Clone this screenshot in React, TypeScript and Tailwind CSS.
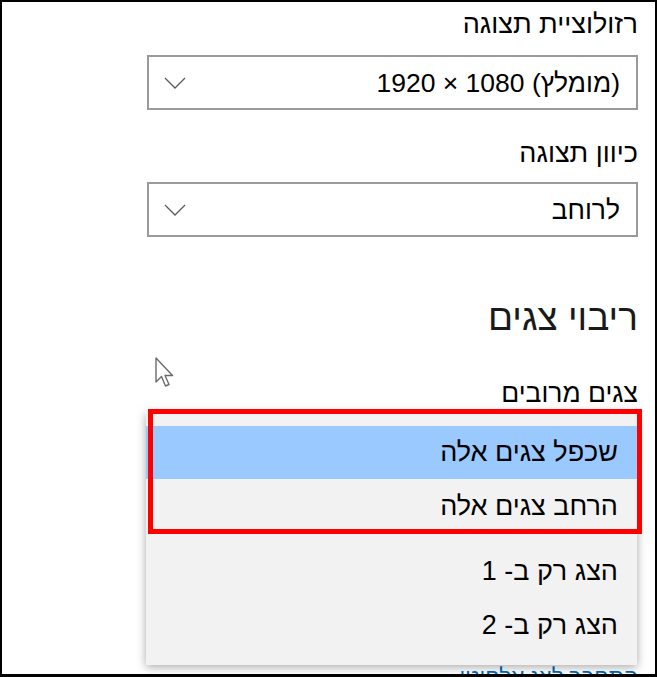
import React from "react";

function Chevron() {
  return (
    <svg width="22" height="12" viewBox="0 0 22 12" className="block">
      <path d="M1 1 L11 11 L21 1" fill="none" stroke="#5a5a5a" strokeWidth="1.3" />
    </svg>
  );
}

function SelectBox({ value }: { value: string }) {
  return (
    <div className="w-[491px] h-[55px] border-2 border-[#9a9a9a] bg-white flex items-center justify-between pr-[16px] pl-[15px]">
      <span className="text-[26.5px] leading-[32px] text-black">{value}</span>
      <Chevron />
    </div>
  );
}

function Cursor() {
  return (
    <svg width="26" height="34" viewBox="0 0 26 34" className="absolute left-[152px] top-[355px]">
      <path
        d="M2 1 L2 25 L7.5 19.5 L11.5 29 L15 27.5 L11 18.5 L18.5 18.5 Z"
        fill="#ffffff"
        stroke="#6b6b6b"
        strokeWidth="1.4"
        strokeLinejoin="round"
      />
    </svg>
  );
}

export default function App() {
  return (
    <div className="w-[657px] h-[677px] bg-black pt-[2px] pl-[2px] pr-[2px] pb-[3px] font-['Liberation_Sans','DejaVu_Sans',sans-serif]">
      <div dir="rtl" className="relative h-full bg-white overflow-hidden pr-[17px] pt-[5px] text-black">
        <div className="text-[27px] leading-[34px]">רזולוציית תצוגה</div>
        <div className="mt-[14px]">
          <SelectBox value="(מומלץ) 1080 × 1920" />
        </div>
        <div className="mt-[26px] text-[27px] leading-[34px]">כיוון תצוגה</div>
        <div className="mt-[12px]">
          <SelectBox value="לרוחב" />
        </div>
        <div className="mt-[58px] text-[37px] leading-[46px] text-[#1a1a1a]">ריבוי צגים</div>
        <div className="mt-[35px] text-[26.5px] leading-[34px]">צגים מרובים</div>
        <div className="mt-[6px]">
          <SelectBox value="" />
        </div>
        <div className="mt-[191px] text-[22px] leading-[30px] text-[#0067b8]">התחבר לצג אלחוטי</div>

        <Cursor />

        <div className="absolute left-[144px] top-[410px] w-[491px] h-[253px] bg-[#f2f2f2] shadow-[0_2px_9px_rgba(0,0,0,0.35)] pt-[14px] pb-[13px] flex flex-col">
          <div className="h-[53px] bg-[#99c9ff] flex items-center pr-[19px] text-[27px]">שכפל צגים אלה</div>
          <div className="h-[55px] flex items-center pr-[19px] text-[27px]">הרחב צגים אלה</div>
          <div className="mt-[10px] h-[54px] flex items-center pr-[19px] text-[27px]">הצג רק ב- 1</div>
          <div className="h-[54px] flex items-center pr-[19px] text-[27px]">הצג רק ב- 2</div>
        </div>

        <div className="absolute left-[146px] top-[407px] w-[494px] h-[125px] border-[5px] border-[#ff0000]" />
      </div>
    </div>
  );
}
